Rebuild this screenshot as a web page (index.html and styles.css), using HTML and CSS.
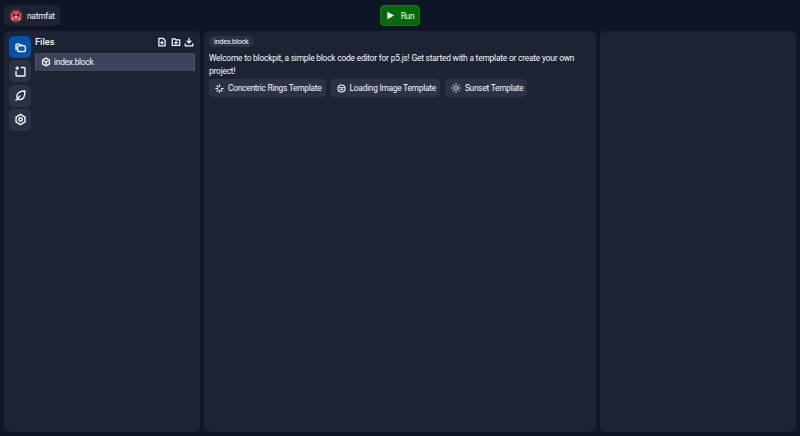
FILE: index.html
```html
<!DOCTYPE html>
<html lang="en">
<head>
<meta charset="utf-8">
<title>blockpit</title>
<link rel="stylesheet" href="styles.css">
</head>
<body>
<header class="topbar">
  <button class="account">
    <svg class="avatar" viewBox="0 0 16 16" width="14" height="14" shape-rendering="crispEdges">
      <circle cx="8" cy="8" r="8" fill="#5a3038"/>
      <rect x="5" y="2" width="6" height="2" fill="#d9484f"/>
      <rect x="2" y="4" width="12" height="8" fill="#d9484f"/>
      <rect x="5" y="12" width="6" height="2" fill="#d9484f"/>
      <rect x="5" y="6" width="2" height="2" fill="#2a1218"/>
      <rect x="9" y="6" width="2" height="2" fill="#2a1218"/>
      <rect x="7" y="8" width="2" height="2" fill="#f3c6bd"/>
      <rect x="3" y="10" width="2" height="2" fill="#f3c6bd"/>
      <rect x="11" y="10" width="2" height="2" fill="#f3c6bd"/>
    </svg>
    <span>natmfat</span>
  </button>
  <button class="run">
    <svg viewBox="0 0 10 10" width="9" height="9"><path d="M1.5 .8 9 5 1.5 9.200z" fill="#fff"/></svg>
    <span>Run</span>
  </button>
</header>
<main class="workspace">
  <section class="panel sidebar">
    <nav class="rail">
      <button class="rail-btn active">
        <svg viewBox="0 0 16 16" width="13" height="13" class="ico rail-ico"><path d="M2.500 10.500V4.500a1 1 0 0 1 1-1H6l1.200 1.300H10"/><rect x="4.500" y="6" width="9.500" height="7" rx="1.300"/></svg>
      </button>
      <button class="rail-btn">
        <svg viewBox="0 0 16 16" width="13" height="13" class="ico rail-ico"><path d="M9 3h3.500a1 1 0 0 1 1 1v8.500a1 1 0 0 1-1 1h-9a1 1 0 0 1-1-1V8"/><path d="M2.500 4h3M4 2.500v3"/></svg>
      </button>
      <button class="rail-btn">
        <svg viewBox="0 0 16 16" width="13" height="13" class="ico rail-ico"><path d="M13.500 2.500C8 2.500 3.500 4.500 3.500 9c0 1.200.4 2.300 1 3 .8.700 1.800 1 3 1 4.500 0 6-5 6-10.500zM2.500 14l5-5.500"/></svg>
      </button>
      <button class="rail-btn">
        <svg viewBox="0 0 16 16" width="13" height="13" class="ico rail-ico"><path d="M8 1.800 13.500 5v6L8 14.200 2.500 11V5z"/><circle cx="8" cy="8" r="2.200"/></svg>
      </button>
    </nav>
    <div class="files">
      <div class="files-head">
        <h2>Files</h2>
        <div class="files-actions">
          <svg viewBox="0 0 16 16" width="10" height="10" class="ico thick"><path d="M3 2h6.500L13 5.500V14H3z"/><path d="M8 7v4M6 9h4"/></svg>
          <svg viewBox="0 0 16 16" width="10" height="10" class="ico thick"><path d="M2 3h4.500L8 4.500h6V13.500H2z"/><path d="M8 7v4M6 9h4"/></svg>
          <svg viewBox="0 0 16 16" width="10" height="10" class="ico thick"><path d="M8 2v7M5 6.500 8 9.500l3-3M2 11v3h12v-3"/></svg>
        </div>
      </div>
      <div class="file-row">
        <svg viewBox="0 0 16 16" width="10" height="10" class="ico thick"><path d="M8 1.800 13.500 5v6L8 14.200 2.500 11V5z"/><path d="M4.800 6.500 8 8.300l3.200-1.800M8 8.300V11.500"/></svg>
        <span>index.block</span>
      </div>
    </div>
  </section>
  <section class="panel editor">
    <span class="tab">index.block</span>
    <p class="welcome">Welcome to blockpit, a simple block code editor for p5.js! Get started with a template or create your own project!</p>
    <div class="templates">
      <button class="template">
        <svg viewBox="0 0 16 16" width="9" height="9" class="ico thick"><path d="M8 1.500v3M8 11.500v3M1.500 8h3M11.500 8h3M3.400 3.400l2.100 2.100M3.400 12.600l2.100-2.100M10.500 10.500l2.100 2.100"/></svg>
        <span>Concentric Rings Template</span>
      </button>
      <button class="template">
        <svg viewBox="0 0 16 16" width="9" height="9" class="ico thick"><circle cx="8" cy="8" r="6.300"/><path d="M5 6.500h2M9 6.500h2M5.500 10.500c1.500-1.200 3.500-1.200 5 0"/></svg>
        <span>Loading Image Template</span>
      </button>
      <button class="template">
        <svg viewBox="0 0 16 16" width="10" height="10" class="ico thin"><circle cx="8" cy="8" r="3"/><path d="M8 1v2M8 13v2M1 8h2M13 8h2M3 3l1.500 1.500M11.500 11.500 13 13M3 13l1.500-1.500M11.500 4.500 13 3"/></svg>
        <span>Sunset Template</span>
      </button>
    </div>
  </section>
  <section class="panel preview"></section>
</main>
</body>
</html>
```
FILE: styles.css
```css
* { box-sizing: border-box; }
html, body { height: 100%; }
body {
  margin: 0;
  display: flex;
  flex-direction: column;
  background: #0e1525;
  color: #f5f9fc;
  font-family: Roboto, "Liberation Sans", sans-serif;
  font-size: 8.400px;
  letter-spacing: -0.26px;
  overflow: hidden;
}
button {
  font: inherit;
  color: inherit;
  letter-spacing: inherit;
  border: 0;
  padding: 0;
  display: flex;
  align-items: center;
}
.ico {
  fill: none;
  stroke: #f5f9fc;
  stroke-width: 1.500;
  stroke-linecap: round;
  stroke-linejoin: round;
  flex: none;
}
.ico.thick { stroke-width: 2; }
.ico.thin { stroke-width: 1.300; }
.ico.rail-ico { stroke-width: 1.700; }

.topbar {
  position: relative;
  flex: none;
  height: 31px;
  padding: 5px 4px 0;
  display: flex;
  justify-content: center;
  align-items: flex-start;
}
.account {
  position: absolute;
  left: 4px;
  top: 5px;
  height: 21px;
  width: 56px;
  padding-left: 5px;
  gap: 4px;
  background: #1c2333;
  border-radius: 5px;
}
.avatar { border-radius: 50%; }
.run {
  height: 21px;
  width: 40px;
  justify-content: center;
  gap: 6px;
  background: #036a07;
  border: 1px solid #04830a;
  border-radius: 4px;
}
.workspace {
  flex: 1;
  display: grid;
  grid-template-columns: 1fr 2fr 1fr;
  gap: 4px;
  padding: 0 4px 4px;
  min-height: 0;
}
.panel {
  background: #1c2333;
  border-radius: 5px;
  min-width: 0;
}
.sidebar {
  display: flex;
  gap: 4px;
  padding: 5px;
}
.editor { padding: 5px; }
.rail {
  display: flex;
  flex-direction: column;
  gap: 2.300px;
}
.rail-btn {
  width: 22px;
  height: 22px;
  justify-content: center;
  background: #2b3245;
  border-radius: 5px;
}
.rail-btn.active { background: #0053a6; }
.files { flex: 1; min-width: 0; }
.files-head {
  height: 17px;
  display: flex;
  justify-content: space-between;
  align-items: center;
  padding: 0 1px 6px 0;
}
.files-head h2 {
  margin: 0;
  font-size: 9.300px;
  font-weight: 500;
  letter-spacing: 0;
}
.files-actions {
  display: flex;
  gap: 3.500px;
}
.file-row {
  height: 18px;
  padding-left: 5px;
  display: flex;
  align-items: center;
  gap: 3px;
  background: #3c445c;
  border-left: 1px solid #4e5569;
  border-right: 1px solid #4e5569;
  border-radius: 1px;
}
.tab {
  display: block;
  width: fit-content;
  height: 11px;
  line-height: 11px;
  padding: 0 5px;
  background: #2b3245;
  border-radius: 6px;
  font-size: 7.400px;
}
.welcome {
  margin: 5px 0 1px;
  line-height: 13px;
  letter-spacing: -0.2px;
}
.templates {
  display: flex;
  gap: 5px;
}
.template {
  height: 18px;
  padding: 0 4px 0 6px;
  gap: 4px;
  background: #2b3245;
  border-radius: 4px;
}
```
